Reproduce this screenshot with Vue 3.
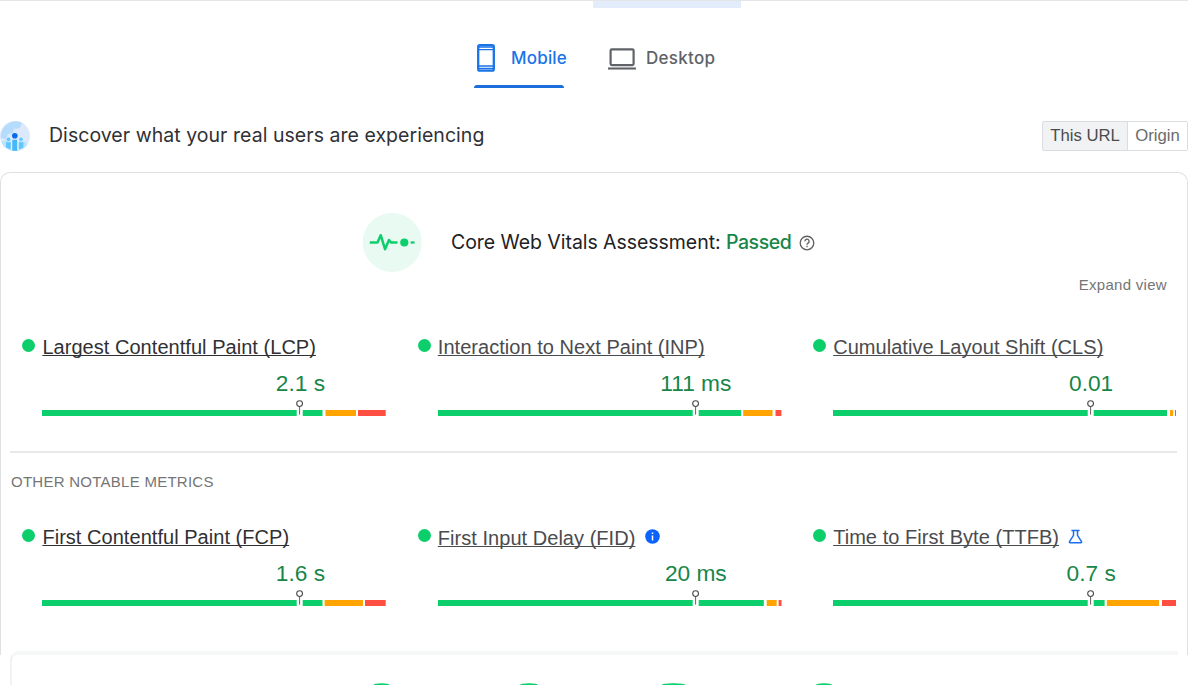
<script setup>
const GREEN = '#0cce6b'
const ORANGE = '#ffa400'
const RED = '#ff4e42'

// Each bar is a list of [start, end, colour] on a 344 unit track.
const bar = (good, average, poor) => [
  [0, 254.7, GREEN],
  [260.7, good, GREEN],
  [...average, ORANGE],
  [...poor, RED],
]

const coreMetrics = [
  { id: 'lcp', name: 'Largest Contentful Paint (LCP)', value: '2.1 s', dark: true, bar: bar(280.5, [283.5, 314], [316, 343.7]) },
  { id: 'inp', name: 'Interaction to Next Paint (INP)', value: '111 ms', bar: bar(303.2, [305.2, 334.5], [337.5, 343.4]) },
  { id: 'cls', name: 'Cumulative Layout Shift (CLS)', value: '0.01', bar: bar(334, [337, 340.2], [342, 343]) },
]
const otherMetrics = [
  { id: 'fcp', name: 'First Contentful Paint (FCP)', value: '1.6 s', dark: true, bar: bar(280.5, [282.6, 321], [323, 343.7]) },
  { id: 'fid', name: 'First Input Delay (FID)', value: '20 ms', icon: 'info', bar: bar(325.8, [328.7, 338.7], [340.6, 343.5]) },
  { id: 'ttfb', name: 'Time to First Byte (TTFB)', value: '0.7 s', icon: 'flask', bar: bar(271.6, [273.8, 326], [329, 343]) },
]
const groups = [
  { id: 'core', metrics: coreMetrics },
  { id: 'notable', metrics: otherMetrics },
]
const gauges = [
  { id: 'performance', x: 381.5, r: 8 },
  { id: 'accessibility', x: 529, r: 9 },
  { id: 'practices', x: 673.5, r: 12 },
  { id: 'seo', x: 824, r: 8 },
]
</script>

<template>
  <div class="page">
    <div class="topline"><span class="topline-active"></span></div>

    <nav class="tabs">
      <div class="tab active">
        <svg class="phone" width="20" height="30" viewBox="0 0 20 30" fill="none" stroke="#1a73e8">
          <rect x="2.2" y="2.2" width="15.6" height="25.4" rx="1.7" stroke-width="2.3" />
          <path d="M2 4.1h16M2 25.5h16" stroke-width="1.5" />
          <path d="M3 6.7h14M3 23h14" stroke-width="1.3" />
        </svg>
        <span class="tab-label mobile">Mobile</span>
      </div>
      <div class="tab">
        <svg class="laptop" width="28" height="22" viewBox="0 0 28 22" fill="none" stroke="#5f6368">
          <rect x="2.6" y="1.3" width="23" height="15.8" rx="1.3" stroke-width="2.2" />
          <path d="M0 20.5h28" stroke-width="2.1" />
        </svg>
        <span class="tab-label desktop">Desktop</span>
      </div>
    </nav>

    <header class="discover">
      <svg class="users" width="30" height="30" viewBox="0 0 30 30">
        <circle cx="15" cy="15" r="15" fill="#dce9fd" />
        <path d="M1 17A15 15 0 0 1 22 1.7L20 7l-6 1-1 4-5 1-2 5z" fill="#b5dcfd" />
        <path d="M1.2 21l5-2 18 1 3.5 3A15 15 0 0 1 1.2 21z" fill="#b9e4ff" />
        <g fill="#63c5fb">
          <circle cx="8.5" cy="18.3" r="1.8" /><circle cx="21" cy="18.3" r="1.8" />
          <path d="M6 21.2h5v7.3l-5-2.3zM18.6 21.2h4.8v5.3l-4.8 2z" />
        </g>
        <path d="M12.3 18.8h5v11h-5z" fill="#46b8fa" />
        <path d="M11.4 18.5v10.6M18 18.5v10.6" stroke="#e4f3ff" stroke-width="1.2" />
        <circle cx="14.8" cy="14.8" r="2.8" fill="#0869ee" />
      </svg>
      <h2 class="discover-title">Discover what your real users are experiencing</h2>
      <div class="toggle">
        <button class="this-url">This URL</button><button class="origin">Origin</button>
      </div>
    </header>

    <main class="card">
      <section class="assessment">
        <svg class="pulse" width="60" height="60" viewBox="0 0 60 60">
          <circle cx="30.2" cy="30.4" r="29.5" fill="#e8faf1" />
          <path d="M7.8 30.5h7.7l3.2-7.3 4.3 14 4-9.2 2 2.5h6.5" fill="none" stroke="#0cce6b" stroke-width="2.5" stroke-linejoin="round" />
          <circle cx="42.3" cy="30.5" r="4.1" fill="#0cce6b" />
          <path d="M48.7 30.5h3.8" stroke="#0cce6b" stroke-width="2.3" />
        </svg>
        <h3 class="assessment-title">Core Web Vitals Assessment: <span class="passed">Passed</span></h3>
        <svg class="help" width="16" height="16" viewBox="0 0 16 16" fill="none" stroke="#616161" stroke-width="1.35">
          <circle cx="8" cy="8" r="6.8" />
          <path d="M5.9 6.4a2.1 2.1 0 1 1 3.2 1.7C8.3 8.6 8 8.9 8 9.8M8 10.8v1.4" />
        </svg>
      </section>
      <div class="expand"><span>Expand view</span></div>

      <template v-for="group in groups" :key="group.id">
        <div v-if="group.id === 'notable'" class="section-label">OTHER NOTABLE METRICS</div>
        <section class="metrics" :class="group.id">
          <article v-for="m in group.metrics" :key="m.id" class="metric">
            <div class="metric-head" :class="m.id">
              <span class="dot"></span>
              <a class="metric-name" :class="{ dark: m.dark }">{{ m.name }}</a>
              <svg v-if="m.icon === 'info'" class="info" width="15" height="15" viewBox="0 0 15 15">
                <circle cx="7.5" cy="7.5" r="7.3" fill="#0b63fb" />
                <path d="M7.5 3.4v1.7M7.5 6.5v5" stroke="#fff" stroke-width="1.5" />
              </svg>
              <svg v-if="m.icon === 'flask'" class="flask" width="15" height="15" viewBox="0 0 15 15" fill="none" stroke="#1a6ff0" stroke-width="1.5">
                <path d="M3.4 1.4h8.2M5.5 1.5v4.8L1.5 12.7q-.4 1 .6 1h10.8q1 0 .6-1L9.5 6.3V1.5" />
              </svg>
            </div>
            <div class="metric-value"><span>{{ m.value }}</span></div>
            <svg class="track" width="344" height="17" viewBox="0 0 344 17">
              <rect v-for="(s, i) in m.bar" :key="i" :x="s[0]" y="10" :width="s[1] - s[0]" height="6" :fill="s[2]" />
              <circle cx="257.6" cy="3.6" r="2.9" fill="#fff" stroke="#4a4a4a" stroke-width="1.1" />
              <path d="M257.6 6.8v7.8" stroke="#616161" stroke-width="1" />
            </svg>
          </article>
        </section>
      </template>
    </main>

    <section class="scores">
      <svg class="arcs" width="1188" height="3" viewBox="0 0 1188 3">
        <ellipse v-for="g in gauges" :key="g.id" :cx="g.x" cy="3" :rx="g.r" ry="1.7" fill="#0cce6b" />
      </svg>
    </section>
  </div>
</template>

<style>
body { margin: 0; background: #fff; overflow: hidden; }
</style>

<style scoped>
* { box-sizing: border-box; }
.page {
  width: 1188px;
  height: 685px;
  overflow: hidden;
  display: flex;
  flex-direction: column;
  background: #fff;
  font-family: "Liberation Sans", Arial, sans-serif;
  color: #212121;
}
.topline { height: 8px; flex: none; border-top: 1px solid #e4e5e7; padding-left: 593px; }
.topline-active { display: block; width: 148px; height: 7px; background: #e2ecfb; }

.tabs { display: flex; height: 80px; flex: none; margin-left: 474px; gap: 43px; }
.tab { display: flex; height: 80px; align-items: flex-start; }
.tab.active { width: 91px; position: relative; }
.tab.active::after {
  content: "";
  position: absolute;
  left: 0;
  bottom: 0;
  width: 90px;
  height: 3px;
  border-radius: 3px 3px 0 0;
  background: #1a6fdb;
}
.phone { margin: 35px 0 0 2px; flex: none; }
.laptop { margin: 40px 0 0; flex: none; }
.tab-label {
  font: 500 17px/24px Inter, sans-serif;
  letter-spacing: .2px;
  margin-top: 38px;
  color: #5f6368;
  white-space: nowrap;
}
.tab-label.mobile { color: #1a73e8; margin-left: 15px; }
.tab-label.desktop { margin-left: 10px; letter-spacing: .3px; }

.discover { display: flex; align-items: center; height: 32px; flex: none; margin-top: 32px; }
.users { flex: none; }
.discover-title {
  flex: 1;
  margin: 0 0 2px 19px;
  font: 400 19.5px/28px Inter, sans-serif;
  letter-spacing: .04px;
  color: #303134;
  white-space: nowrap;
}
.toggle { display: flex; height: 30px; border: 1px solid #dadce0; border-radius: 2px; width: 146px; }
.toggle button {
  border: 0;
  margin: 0;
  padding: 0 0 1px;
  background: #fff;
  font: 16.7px/26px "Liberation Sans", Arial, sans-serif;
  color: #6b6b6b;
  white-space: nowrap;
}
.toggle .this-url { width: 85px; background: #f0f2f3; color: #4b4b4d; border-right: 1px solid #dadce0; }
.toggle .origin { flex: 1; }

.card {
  height: 483px;
  flex: none;
  margin-top: 20px;
  border: 1px solid #dfe0e2;
  border-bottom: 0;
  border-radius: 10px 10px 0 0;
}
.assessment { display: flex; align-items: center; height: 60px; margin: 39px 0 0 361px; }
.pulse { flex: none; }
.assessment-title {
  margin: 0 0 1px 29px;
  width: 339px;
  font: 400 19.5px/28px Inter, sans-serif;
  letter-spacing: -.05px;
  color: #212124;
  white-space: nowrap;
}
.passed { color: #178648; font-weight: 500; letter-spacing: -.45px; }
.help { margin: 2px 0 0 9px; flex: none; }
.expand { display: flex; justify-content: flex-end; height: 24px; margin-right: 20px; font-size: 15px; line-height: 26px; color: #757575; letter-spacing: .3px; }

.metrics { display: grid; grid-template-columns: repeat(3, 395.4px); margin-left: 21.4px; }
.metrics.core { margin-top: 36px; height: 119px; }
.metric-head { display: flex; height: 28px; align-items: center; }
.dot { width: 13px; height: 13px; border-radius: 50%; background: #0cce6b; margin: 0 7px 2px 0; flex: none; }
.metric-name {
  padding-top: 1px;
  font-size: 20px;
  letter-spacing: .04px;
  line-height: 28px;
  color: #4a4b4e;
  text-decoration: underline;
  text-decoration-thickness: 1.4px;
  text-underline-offset: 1px;
  text-decoration-skip-ink: none;
  white-space: nowrap;
}
.metric-name.dark { color: #303033; }
.fid .metric-name { padding-top: 3px; }
.info { margin-left: 10px; }
.flask { margin-left: 9px; }
.metric-value {
  display: flex;
  justify-content: center;
  width: 120px;
  margin-left: 218px;
  height: 40px;
  padding-top: 7px;
  font-size: 22.7px;
  line-height: 32px;
  color: #178648;
  white-space: nowrap;
}
.track { display: block; margin: 0 0 0 20px; }
.section-label {
  height: 71px;
  margin: 0 10px 0 9px;
  border-top: 2px solid #e8e9ea;
  padding: 19px 0 0 1px;
  font-size: 15px;
  letter-spacing: .26px;
  line-height: 20px;
  color: #757575;
}
.scores {
  height: 40px;
  flex: none;
  margin: -4px 10px 0;
  border-top: 4px solid #f5f8f7;
  border-left: 2px solid #f1f3f3;
  border-radius: 9px 0 0 0;
  position: relative;
}
.arcs { position: absolute; left: -12px; top: 27px; }
</style>
